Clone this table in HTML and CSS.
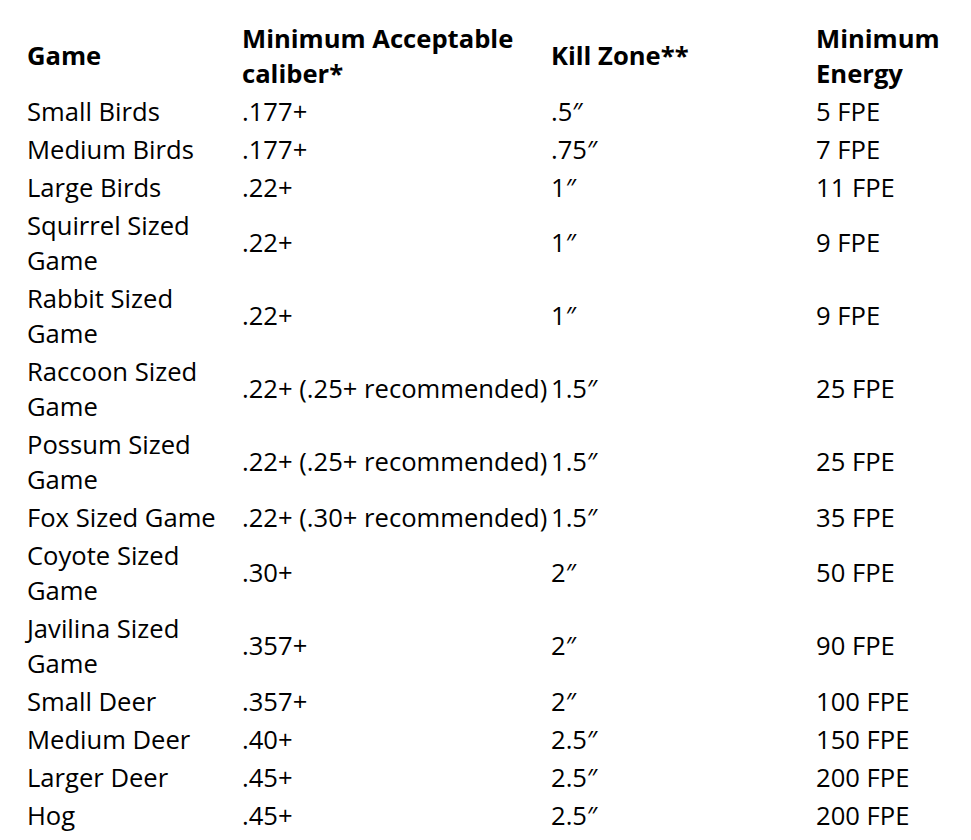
FILE: index.html
```html
<!DOCTYPE html>
<html>
<head>
<meta charset="utf-8">
<link rel="stylesheet" href="styles.css">
</head>
<body>
<table class="game-table">
  <colgroup>
    <col class="c1"><col class="c2"><col class="c3"><col class="c4">
  </colgroup>
  <thead>
    <tr><th>Game</th><th>Minimum Acceptable caliber*</th><th>Kill Zone**</th><th>Minimum Energy</th></tr>
  </thead>
  <tbody>
    <tr><td>Small Birds</td><td>.177+</td><td>.5″</td><td>5 FPE</td></tr>
    <tr><td>Medium Birds</td><td>.177+</td><td>.75″</td><td>7 FPE</td></tr>
    <tr><td>Large Birds</td><td>.22+</td><td>1″</td><td>11 FPE</td></tr>
    <tr><td>Squirrel Sized Game</td><td>.22+</td><td>1″</td><td>9 FPE</td></tr>
    <tr><td>Rabbit Sized Game</td><td>.22+</td><td>1″</td><td>9 FPE</td></tr>
    <tr><td>Raccoon Sized Game</td><td>.22+ (.25+ recommended)</td><td>1.5″</td><td>25 FPE</td></tr>
    <tr><td>Possum Sized Game</td><td>.22+ (.25+ recommended)</td><td>1.5″</td><td>25 FPE</td></tr>
    <tr><td>Fox Sized Game</td><td>.22+ (.30+ recommended)</td><td>1.5″</td><td>35 FPE</td></tr>
    <tr><td>Coyote Sized Game</td><td>.30+</td><td>2″</td><td>50 FPE</td></tr>
    <tr><td>Javilina Sized Game</td><td>.357+</td><td>2″</td><td>90 FPE</td></tr>
    <tr><td>Small Deer</td><td>.357+</td><td>2″</td><td>100 FPE</td></tr>
    <tr><td>Medium Deer</td><td>.40+</td><td>2.5″</td><td>150 FPE</td></tr>
    <tr><td>Larger Deer</td><td>.45+</td><td>2.5″</td><td>200 FPE</td></tr>
    <tr><td>Hog</td><td>.45+</td><td>2.5″</td><td>200 FPE</td></tr>
  </tbody>
</table>
</body>
</html>
```
FILE: styles.css
```css
html, body {
  margin: 0;
  padding: 0;
  background: #fff;
}
body {
  font-family: "Open Sans", "Noto Sans", sans-serif;
  font-size: 25.6px;
  line-height: 35px;
  color: #000;
}
.game-table {
  margin: 19px 0 0 27px;
  border-collapse: collapse;
  border-spacing: 0;
  table-layout: fixed;
  width: 919px;
}
.c1 { width: 215px; }
.c2 { width: 309px; }
.c3 { width: 265px; }
.c4 { width: 130px; }
.game-table th,
.game-table td {
  padding: 1.5px 0;
  text-align: left;
  vertical-align: middle;
}
.game-table th {
  font-weight: 700;
}
```
